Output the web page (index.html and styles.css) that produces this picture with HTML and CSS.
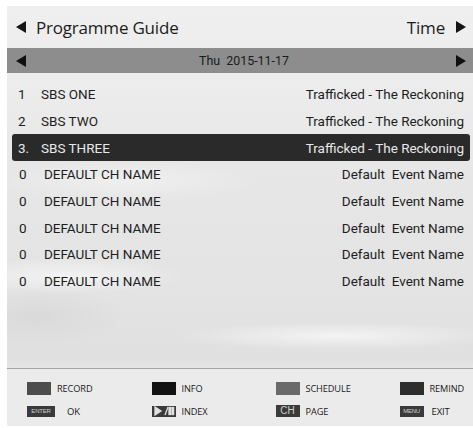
FILE: index.html
```html
<!DOCTYPE html>
<html>
<head>
<meta charset="utf-8">
<link rel="stylesheet" href="styles.css">
</head>
<body>
<div class="panel">
  <div class="title">
    <div class="title-left">
      <svg class="tri-big" viewBox="0 0 10 12"><polygon points="10,0 10,12 0,6"/></svg>
      <span class="title-text">Programme Guide</span>
    </div>
    <div class="title-right">
      <span class="title-text">Time</span>
      <svg class="tri-big" viewBox="0 0 10 12"><polygon points="0,0 10,6 0,12"/></svg>
    </div>
  </div>
  <div class="datebar">
    <svg class="tri-small" viewBox="0 0 10 12"><polygon points="10,0 10,12 0,6"/></svg>
    <span class="date">Thu&nbsp; 2015-11-17</span>
    <svg class="tri-small" viewBox="0 0 10 12"><polygon points="0,0 10,6 0,12"/></svg>
  </div>
  <div class="list">
    <div class="row"><span class="num">1</span><span class="name">SBS ONE</span><span class="event">Trafficked - The Reckoning</span></div>
    <div class="row"><span class="num">2</span><span class="name">SBS TWO</span><span class="event">Trafficked - The Reckoning</span></div>
    <div class="row row-sel"><span class="num">3.</span><span class="name">SBS THREE</span><span class="event">Trafficked - The Reckoning</span></div>
    <div class="row row-def"><span class="num">0</span><span class="name">DEFAULT CH NAME</span><span class="event">Default&nbsp; Event Name</span></div>
    <div class="row row-def"><span class="num">0</span><span class="name">DEFAULT CH NAME</span><span class="event">Default&nbsp; Event Name</span></div>
    <div class="row row-def"><span class="num">0</span><span class="name">DEFAULT CH NAME</span><span class="event">Default&nbsp; Event Name</span></div>
    <div class="row row-def"><span class="num">0</span><span class="name">DEFAULT CH NAME</span><span class="event">Default&nbsp; Event Name</span></div>
    <div class="row row-def"><span class="num">0</span><span class="name">DEFAULT CH NAME</span><span class="event">Default&nbsp; Event Name</span></div>
  </div>
  <div class="footer">
    <div class="key"><span class="sw sw-red"></span><span class="lbl">RECORD</span></div>
    <div class="key"><span class="sw sw-yellow"></span><span class="lbl">INFO</span></div>
    <div class="key"><span class="sw sw-green"></span><span class="lbl">SCHEDULE</span></div>
    <div class="key"><span class="sw sw-blue"></span><span class="lbl">REMIND</span></div>
    <div class="key"><span class="badge badge-enter">ENTER</span><span class="lbl lbl-ok">OK</span></div>
    <div class="key"><span class="badge badge-play"><svg viewBox="0 0 24 12" class="play"><polygon points="3,2 3,10 9,6"/><line x1="13" y1="10" x2="16" y2="2"/><rect x="17" y="2.5" width="1.6" height="7"/><rect x="20" y="2.5" width="1.6" height="7"/></svg></span><span class="lbl">INDEX</span></div>
    <div class="key"><span class="badge badge-ch">CH</span><span class="lbl">PAGE</span></div>
    <div class="key"><span class="badge badge-menu">MENU</span><span class="lbl lbl-exit">EXIT</span></div>
  </div>
</div>
</body>
</html>
```

FILE: styles.css
```css
html, body {
  margin: 0;
  padding: 0;
  background: #ffffff;
}

body {
  width: 473px;
  height: 428px;
  overflow: hidden;
}

.panel {
  margin: 6px 0 0 7px;
  width: 466px;
  height: 420px;
  display: flex;
  flex-direction: column;
  background:
    radial-gradient(ellipse 120px 18px at 60px 270px, rgba(255,255,255,0.55), rgba(255,255,255,0)),
    radial-gradient(ellipse 160px 14px at 330px 330px, rgba(255,255,255,0.6), rgba(255,255,255,0)),
    radial-gradient(ellipse 140px 20px at 120px 175px, rgba(255,255,255,0.35), rgba(255,255,255,0)),
    radial-gradient(ellipse 90px 30px at 30px 310px, rgba(200,200,200,0.35), rgba(200,200,200,0)),
    linear-gradient(to bottom, #efefef 0px, #ececec 80px, #e6e6e6 180px, #e3e3e3 300px, #e0e0e0 355px, #e6e6e6 362px);
  font-family: "Roboto", "Liberation Sans", sans-serif;
  color: #222222;
}

/* Title row */
.title {
  height: 42px;
  flex: none;
  display: flex;
  align-items: center;
  justify-content: space-between;
  padding: 0 7px 0 9px;
}

.title-left,
.title-right {
  display: flex;
  align-items: center;
}

.title-left .title-text {
  margin-left: 10px;
}

.title-right .title-text {
  margin-right: 11px;
}

.title-text {
  font-family: "Open Sans", "Noto Sans", sans-serif;
  font-size: 17px;
  letter-spacing: -0.2px;
  color: #1c1c1c;
  line-height: 20px;
  position: relative;
  top: 1px;
}

.tri-big {
  width: 10px;
  height: 12px;
  fill: #151515;
  display: block;
}

/* Date bar */
.datebar {
  height: 25px;
  flex: none;
  background: #8d8d8d;
  display: flex;
  align-items: center;
  justify-content: space-between;
  padding: 0 7px 0 9px;
}

.tri-small {
  width: 10px;
  height: 12px;
  fill: #101010;
  display: block;
}

.date {
  font-size: 12.4px;
  color: #1b1b1b;
  position: relative;
  left: 3px;
}

/* Channel list */
.list {
  flex: 1;
  padding: 8px 3px 0 5px;
}

.row {
  height: 26.7px;
  display: flex;
  align-items: center;
  padding: 0 6px;
  font-size: 13.5px;
  color: #1e1e1e;
}

.num {
  width: 23px;
  flex: none;
}

.row-def .num {
  width: 26px;
  padding-left: 1px;
  box-sizing: border-box;
}

.name {
  flex: 1;
}

.event {
  text-align: right;
}

.row-sel {
  background: #2a2a2a;
  color: #e8e8e8;
  border-radius: 3px;
}

/* Footer */
.footer {
  height: 58px;
  flex: none;
  border-top: 1px solid #a4a4a4;
  box-sizing: border-box;
  background: #ebebeb;
  display: grid;
  grid-template-columns: 124.5px 124px 124px 1fr;
  grid-template-rows: 24px 22px;
  align-items: center;
  padding: 7px 0 0 20px;
}

.key {
  display: flex;
  align-items: center;
}

.sw {
  width: 24px;
  height: 13px;
  flex: none;
  margin-right: 6px;
}

.sw-red { background: #4d4d4d; }
.sw-yellow { background: #121212; }
.sw-green { background: #6a6a6a; }
.sw-blue { background: #2e2e2e; }

.lbl {
  font-family: "Open Sans", "Noto Sans", sans-serif;
  font-size: 9.2px;
  color: #1a1a1a;
  letter-spacing: -0.1px;
}

.badge {
  height: 11px;
  width: 24px;
  flex: none;
  margin-right: 6px;
  background: #3a3a3a;
  color: #cfcfcf;
  display: flex;
  align-items: center;
  justify-content: center;
  font-family: "Liberation Sans", sans-serif;
  line-height: 1;
}

.badge-enter {
  width: 28px;
  font-size: 6px;
  letter-spacing: -0.2px;
  margin-right: 12px;
}

.badge-menu {
  font-size: 6px;
  letter-spacing: -0.3px;
  margin-right: 8px;
}

.badge-ch {
  font-size: 10px;
  height: 12px;
}

.play {
  width: 24px;
  height: 12px;
  fill: #e0e0e0;
  stroke: #e0e0e0;
  stroke-width: 1.3;
}

.lbl-ok,
.lbl-exit {
  font-size: 9.5px;
}
```
